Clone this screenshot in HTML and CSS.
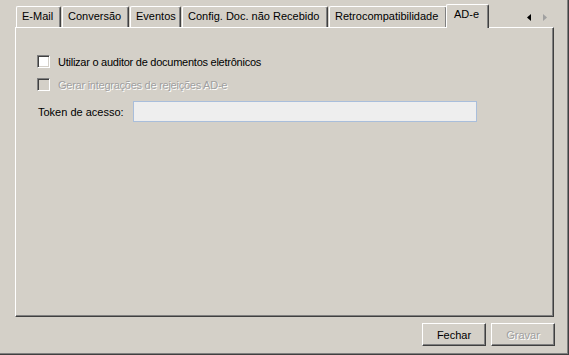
FILE: index.html
```html
<!DOCTYPE html>
<html lang="pt-BR">
<head>
<meta charset="utf-8">
<title>AD-e</title>
<link rel="stylesheet" href="styles.css">
</head>
<body>
<div class="window">
  <div class="tabstrip">
    <div class="tab tab-email">E-Mail</div>
    <div class="tab tab-conversao">Conversão</div>
    <div class="tab tab-eventos">Eventos</div>
    <div class="tab tab-config">Config. Doc. não Recebido</div>
    <div class="tab tab-retro">Retrocompatibilidade</div>
    <div class="tab tab-active">AD-e</div>
    <div class="tab-scroll">
      <svg class="arrow" width="4" height="7" viewBox="0 0 4 7"><polygon points="4,0 0,3.5 4,7" fill="#000"/></svg>
      <svg class="arrow" width="5" height="7" viewBox="0 0 5 7"><polygon points="0,0 4,3.5 0,7" fill="#a0a0a0"/></svg>
    </div>
  </div>
  <div class="panel">
    <div class="check-row"><span class="checkbox"></span><span class="check-text">Utilizar o auditor de documentos eletrônicos</span></div>
    <div class="check-row check-disabled"><span class="checkbox"></span><span class="check-text">Gerar integrações de rejeições AD-e</span></div>
    <div class="field-row"><span class="field-label">Token de acesso:</span><span class="textbox"></span></div>
  </div>
  <div class="buttons">
    <button class="btn">Fechar</button>
    <button class="btn btn-disabled">Gravar</button>
  </div>
</div>
</body>
</html>
```
FILE: styles.css
```css
html, body {
  margin: 0;
  padding: 0;
}
body {
  font-family: "Liberation Sans", Arial, sans-serif;
  font-size: 11px;
  color: #000;
  background: #d4d0c8;
}
.window {
  width: 569px;
  height: 355px;
  box-sizing: border-box;
  background: #d4d0c8;
  border-right: 1px solid #404040;
  border-bottom: 1px solid #404040;
  box-shadow: inset -1px -1px 0 #808080;
  padding: 0 13px 0 15px;
}
.tabstrip {
  display: flex;
  align-items: flex-end;
  height: 27px;
  padding-left: 1px;
}
.tab {
  height: 21px;
  box-sizing: border-box;
  padding: 0 0 0 5px;
  line-height: 19px;
  border-top: 1px solid #fff;
  border-left: 1px solid #fff;
  border-right: 1px solid #404040;
  border-radius: 2px 2px 0 0;
  box-shadow: inset -1px 0 0 #808080;
  margin-right: 1px;
  white-space: nowrap;
  background: #d4d0c8;
  flex: none;
}
.tab-email { width: 45px; }
.tab-conversao { width: 67px; }
.tab-eventos { width: 51px; }
.tab-config { width: 146px; }
.tab-retro { width: 118px; }
.tab-active {
  width: 43px;
  height: 24px;
  position: relative;
  z-index: 1;
  margin: 0 0 -1px -2px;
  padding: 0 0 0 7px;
  line-height: 19px;
}
.tab-scroll {
  margin-left: auto;
  margin-right: 7px;
  align-self: flex-start;
  margin-top: 14px;
  display: flex;
  gap: 12px;
}
.arrow {
  display: block;
}
.panel {
  width: 539px;
  height: 290px;
  box-sizing: border-box;
  border-top: 1px solid #fff;
  border-left: 1px solid #fff;
  border-right: 1px solid #404040;
  border-bottom: 1px solid #404040;
  box-shadow: inset -1px -1px 0 #808080;
  padding: 27px 0 0 21px;
}
.check-row {
  display: flex;
  align-items: center;
  height: 13px;
  margin-bottom: 10px;
  white-space: nowrap;
}
.check-text {
  letter-spacing: -0.25px;
}
.checkbox {
  width: 13px;
  height: 13px;
  box-sizing: border-box;
  background: #fff;
  border: 1px solid;
  border-color: #808080 #fff #fff #808080;
  box-shadow: inset 1px 1px 0 #404040, inset -1px -1px 0 #d4d0c8;
  margin-right: 8px;
  flex: none;
}
.check-disabled {
  color: #a0a0a0;
  text-shadow: 1px 1px 0 #fff;
}
.check-disabled .checkbox {
  background: #d4d0c8;
}
.field-row {
  display: flex;
  align-items: center;
  margin-top: 4px;
}
.field-label {
  width: 96px;
  padding-left: 1px;
  box-sizing: border-box;
  white-space: nowrap;
}
.textbox {
  width: 344px;
  height: 21px;
  box-sizing: border-box;
  border: 1px solid #a9bedb;
  background: #eeeeee;
}
.buttons {
  display: flex;
  justify-content: flex-end;
  gap: 5px;
  margin-top: 6px;
}
.btn {
  width: 64px;
  height: 23px;
  padding: 0;
  font: inherit;
  color: #000;
  background: #d4d0c8;
  border: 1px solid;
  border-color: #fff #404040 #404040 #fff;
  box-shadow: inset -1px -1px 0 #808080;
  border-radius: 0;
}
.btn-disabled {
  color: #a0a0a0;
  text-shadow: 1px 1px 0 #fff;
}
```
